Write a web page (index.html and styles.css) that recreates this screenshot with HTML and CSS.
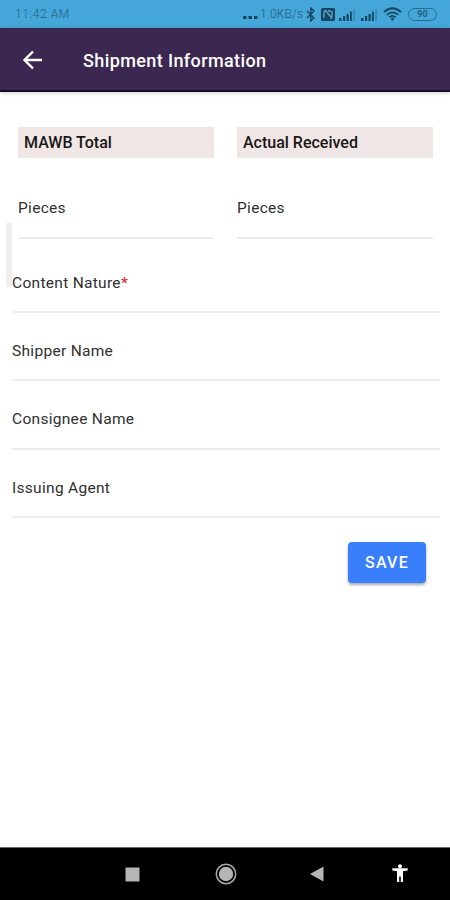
FILE: index.html
```html
<!DOCTYPE html>
<html lang="en">
<head>
<meta charset="utf-8">
<title>Shipment Information</title>
<link rel="stylesheet" href="styles.css">
</head>
<body>
<div class="phone">
  <div class="status">
    <span class="clock">11:42 AM</span>
    <svg class="dots" width="15" height="15" viewBox="0 0 15 15"><path d="M0 9h3.500v3H0zM5.500 9H9v3H5.500zM11 9h3.500v3H11z"/></svg>
    <span class="speed">1.0KB/s</span>
    <svg class="bluetooth" width="10" height="15" viewBox="0 0 10 15"><path d="M1 4l7 7-3.200 3V1L8 4l-7 7"/></svg>
    <svg class="nfc" width="14" height="13" viewBox="0 0 14 13"><rect width="14" height="13" rx="1.500"/><path d="M3 10V4q0-1.500 1.500-1.500L10 9M11 3v6q0 1.500-1.500 1.500M7 3h3"/></svg>
    <svg class="signal first" width="16" height="13" viewBox="0 0 16 13"><path d="M0 10h2.500v3H0zM4 8h2.200v5H4zM7.500 6h2.200v7H7.500zM11 3.500h1.800V13H11z"/><path class="faint" d="M14.200 1H16v12h-1.800z"/></svg>
    <svg class="signal" width="16" height="13" viewBox="0 0 16 13"><path d="M0 10h2.500v3H0zM4 8h2.200v5H4zM7.500 6h2.200v7H7.500zM11 3.500h1.800V13H11z"/><path class="faint" d="M14.200 1H16v12h-1.800z"/></svg>
    <svg class="wifi" width="19" height="14" viewBox="0 0 19 14"><path d="M1 5q8.500-7.500 17 0M3.700 7.800q5.800-5 11.600 0M6.300 10.300q3.200-2.800 6.400 0"/><circle cx="9.500" cy="12" r="1.500"/></svg>
    <span class="battery">90</span>
  </div>
  <header class="bar">
    <svg class="back" width="20" height="20" viewBox="0 0 20 20"><path d="M19 10H2M10 1.500L1.500 10l8.500 8.500"/></svg>
    <h1 class="title">Shipment Information</h1>
  </header>
  <main class="content">
    <div class="columns">
      <section><h2 class="tag mawb">MAWB Total</h2><div class="field pieces">Pieces</div></section>
      <section><h2 class="tag">Actual Received</h2><div class="field pieces">Pieces</div></section>
    </div>
    <div class="fields">
      <i class="thumb"></i>
      <div class="field nature">Content Nature<b class="star">*</b></div>
      <div class="field">Shipper Name</div>
      <div class="field">Consignee Name</div>
      <div class="field">Issuing Agent</div>
    </div>
    <button class="save">SAVE</button>
  </main>
  <nav class="nav">
    <svg width="15" height="15" viewBox="0 0 15 15"><path d="M.5.500h14v14H.5z"/></svg>
    <svg class="home" width="22" height="22" viewBox="0 0 22 22"><circle class="ring" cx="11" cy="11" r="9.700"/><circle cx="11" cy="11" r="7.200"/></svg>
    <svg class="prev" width="14" height="16" viewBox="0 0 14 16"><path d="M0 8L13.500.500v15z"/></svg>
    <svg class="person" width="16" height="19" viewBox="0 0 16 19"><circle cx="8" cy="2.200" r="2"/><path d="M.3 4.200h15.400v2.300L11 7.200V18H8.800v-5.500H7.200V18H5V7.200L.3 6.500z"/></svg>
  </nav>
</div>
</body>
</html>
```
FILE: styles.css
```css
* { box-sizing: border-box; }
body { margin: 0; font-family: Roboto, "Liberation Sans", sans-serif; color: #303030; background: #fff; }
svg { display: block; flex: none; }
.phone { height: 900px; display: flex; flex-direction: column; overflow: hidden; }
.status { height: 28px; flex: none; display: flex; align-items: center; padding: 0 13px 0 15px; background: #45a6d9; color: #24617f; font: 300 12px/28px Roboto, sans-serif; white-space: nowrap; }
.status svg { fill: #164661; }
.clock { width: 228px; letter-spacing: .6px; }
.speed { width: 46px; margin-left: 2px; letter-spacing: .2px; }
.status .bluetooth { fill: none; stroke: #164661; stroke-width: 1.4; }
.status .nfc { margin-left: 5px; }
.nfc path { fill: none; stroke: #65a9cb; stroke-width: 1.3; }
.signal { margin-left: 6px; }
.signal.first { margin-left: 4px; }
.signal .faint { opacity: .3; }
.wifi { margin-left: 6px; }
.wifi path { fill: none; stroke: #164661; stroke-width: 1.7; }
.battery { width: 29px; height: 13px; margin-left: auto; border: 1.5px solid #2a6c8e; border-radius: 7px; font: bold 9px/10px Roboto, sans-serif; text-align: center; }
.bar { height: 64px; flex: none; display: flex; align-items: center; padding-left: 23px; background: #3b274f; border-bottom: 2px solid #160d2c; box-shadow: 0 1px 4px #0003; color: #fff; }
.back { margin-top: 2px; fill: none; stroke: #fff; stroke-width: 2.4; }
.title { margin: 3px 0 0 40px; font-size: 18px; line-height: 24px; font-weight: 500; letter-spacing: .39px; }
.content { flex: 1; display: flex; flex-direction: column; padding: 35px 10px 0 12px; }
.columns { display: grid; grid-template-columns: 196px 196px; gap: 23px; margin-left: 6px; }
.tag { height: 31px; margin: 0; padding-left: 6px; background: #f0e6e5; color: #171717; font-size: 16px; line-height: 31px; font-weight: 500; }
.field { height: 68.300px; padding-top: 28px; border-bottom: 2px solid #ededed; font-size: 15.500px; line-height: 20px; letter-spacing: .3px; }
.field.pieces { height: 81px; padding-top: 40px; }
.fields { position: relative; }
.field.nature { height: 74px; padding-top: 34px; position: relative; }
.star { color: #df2f32; font-weight: 500; }
.thumb { position: absolute; left: -6px; top: -16px; width: 6px; height: 64px; background: #efefef; }
.save { align-self: flex-end; width: 78px; height: 41px; margin: 24px 14px 0 0; padding: 0; border: 0; border-radius: 4px; background: #397ffb; color: #fff; font: 500 16px/41px Roboto, sans-serif; letter-spacing: 1.2px; box-shadow: 0 2px 3px #0005; }
.nav { height: 53px; flex: none; display: flex; align-items: center; padding-left: 125px; background: #000; border-top: 1px solid #666; }
.nav svg { fill: #b5b5b5; }
.home { margin-left: 75px; }
.nav .ring { fill: none; stroke: #aaa; stroke-width: 1.5; }
.prev { margin-left: 73px; }
.nav .person { margin-left: 68px; margin-top: -2px; fill: #fff; }
```
